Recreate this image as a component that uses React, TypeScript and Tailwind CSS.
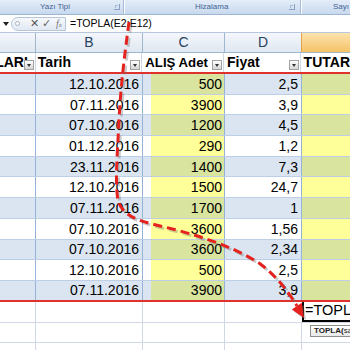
const dates = [
  "12.10.2016",
  "07.11.2016",
  "07.10.2016",
  "01.12.2016",
  "23.11.2016",
  "12.10.2016",
  "07.11.2016",
  "07.10.2016",
  "07.10.2016",
  "12.10.2016",
  "07.11.2016",
];
const adet = ["500", "3900", "1200", "290", "1400", "1500", "1700", "3600", "3600", "500", "3900"];
const fiyat = ["2,5", "3,9", "4,5", "1,2", "7,3", "24,7", "1", "1,56", "2,34", "2,5", "3,9"];

const curve =
  "M129,22 C126,45 121,80 119,120 C117,160 115,185 118,200 C122,215 136,220 156,225 C191,233 231,245 259,263 C277,276 289,293 297,306";
const head = "304,318 291.8,309.6 301.8,302.8";

function FilterBtn() {
  return (
    <span className="absolute right-[1px] bottom-[2px] w-[10px] h-[10px] border border-[#a3a3a3] bg-gradient-to-b from-white to-[#d6d6d6] flex items-center justify-center">
      <span className="w-0 h-0 border-l-[2.5px] border-r-[2.5px] border-t-[3px] border-l-transparent border-r-transparent border-t-[#333]" />
    </span>
  );
}

function Launcher() {
  return (
    <span className="w-[6px] h-[6px] border-r border-b border-[#8aa2c2] relative">
      <span className="absolute left-[1px] top-[1px] w-[3px] h-[3px] border-l border-t border-[#a9bcd6]" />
    </span>
  );
}

export default function App() {
  return (
    <div
      className="relative w-[350px] h-[350px] overflow-hidden bg-white text-black"
      style={{ fontFamily: '"Liberation Sans", Arial, sans-serif' }}
    >
      {/* ribbon group labels */}
      <div className="flex h-[15px] bg-gradient-to-b from-[#e4edf8] to-[#c8d9ee] border-b border-[#9fb6d3] text-[8px] text-[#3f6394]">
        <div className="w-[124px] flex items-center border-r border-[#a6bbd6] pl-[40px] pr-[3px]">
          <span className="flex-1">Yazı Tipi</span>
          <Launcher />
        </div>
        <div className="w-[177px] flex items-center border-l border-white border-r border-r-[#a6bbd6] pl-[70px] pr-[5px]">
          <span className="flex-1">Hizalama</span>
          <Launcher />
        </div>
        <div className="flex-1 flex items-center border-l border-white pl-[31px]">
          <span>Sayı</span>
        </div>
      </div>

      {/* formula bar */}
      <div className="flex items-center h-[18px] bg-white border-b border-[#b6c7dd]">
        <div className="w-[11px] flex items-center justify-center">
          <span className="w-0 h-0 border-l-[3px] border-r-[3px] border-t-[4px] border-l-transparent border-r-transparent border-t-[#222]" />
        </div>
        <div className="w-[55px] h-[14px] flex items-center rounded-l-full border border-[#b5c6dc] bg-gradient-to-b from-[#f7f9fc] to-[#e1e8f2] pl-[3px] text-[#6b7584]">
          <span className="w-[5px] h-[5px] rounded-full border border-[#a6b2c2] bg-white" />
          <span className="ml-[10px] text-[11px] leading-none text-[#555]">✕</span>
          <span className="ml-[3px] text-[11px] leading-none text-[#666]">✓</span>
          <span className="ml-[5px] text-[10px] leading-none italic text-[#777]" style={{ fontFamily: '"Liberation Serif", serif' }}>
            f<span className="text-[7px]">x</span>
          </span>
        </div>
        <span className="ml-[4px] text-[10.5px] leading-none">=TOPLA(E2:E12)</span>
      </div>

      {/* column headers */}
      <div className="flex h-[20px] text-[14px] text-[#27415f] border-b border-[#9eb6ce]">
        <div className="w-[36px] bg-gradient-to-b from-[#f4f7fb] to-[#dfe7f1] border-r border-[#9eb6ce]" />
        <div className="w-[107px] flex items-center justify-center bg-gradient-to-b from-[#f4f7fb] to-[#dfe7f1] border-r border-[#9eb6ce]">B</div>
        <div className="w-[82px] flex items-center justify-center bg-gradient-to-b from-[#f4f7fb] to-[#dfe7f1] border-r border-[#9eb6ce]">C</div>
        <div className="w-[77px] flex items-center justify-center bg-gradient-to-b from-[#f4f7fb] to-[#dfe7f1] border-r border-[#e1a24a]">D</div>
        <div className="flex-1 bg-gradient-to-b from-[#fce3ae] to-[#f5c266]" />
      </div>

      {/* table header row */}
      <div className="flex h-[21px] text-[14px] font-bold border-b-2 border-[#e0322d]">
        <div className="relative w-[36px] overflow-hidden border-r border-[#d0d7e5] flex items-center justify-end pr-[7px] whitespace-nowrap">
          ÜRÜNLARI
          <FilterBtn />
        </div>
        <div className="relative w-[107px] border-r border-[#d0d7e5] flex items-center pl-[2px]">
          Tarih
          <FilterBtn />
        </div>
        <div className="relative w-[82px] border-r border-[#d0d7e5] flex items-center pl-[3px] whitespace-nowrap text-[13.2px]">
          ALIŞ Adet
          <FilterBtn />
        </div>
        <div className="relative w-[77px] border-r border-[#d0d7e5] flex items-center pl-[3px]">
          Fiyat
          <FilterBtn />
        </div>
        <div className="flex-1 flex items-center pl-[3px]">TUTAR</div>
      </div>

      {/* data rows */}
      {dates.map((d, i) => {
        const even = i % 2 === 0;
        const rowBg = even ? "bg-[#dbe5f1]" : "bg-white";
        const yel = even ? "bg-[#d9e59e]" : "bg-[#ffff99]";
        const last = i === dates.length - 1;
        return (
          <div
            key={i}
            className={
              "flex h-[20.7px] text-[14px] leading-none " +
              (last ? "border-b-2 border-[#e0322d]" : "border-b border-[#bccfe6]")
            }
          >
            <div className={"w-[36px] border-r border-[#95b3d7] " + rowBg} />
            <div className={"w-[107px] border-r border-[#95b3d7] flex items-center justify-end pr-[3px] " + rowBg}>{d}</div>
            <div className={"w-[82px] border-r border-[#95b3d7] flex " + rowBg}>
              <div className={"ml-[8px] flex-1 flex items-center justify-end pr-[2px] " + yel}>{adet[i]}</div>
            </div>
            <div className={"w-[77px] border-r border-[#95b3d7] flex items-center justify-end pr-[3px] " + rowBg}>{fiyat[i]}</div>
            <div className={"flex-1 " + yel} />
          </div>
        );
      })}

      {/* rows below the table */}
      <div className="flex h-[21px] border-b border-[#d0d7e5]">
        <div className="w-[36px] border-r border-[#d0d7e5]" />
        <div className="w-[107px] border-r border-[#d0d7e5]" />
        <div className="w-[82px] border-r border-[#d0d7e5]" />
        <div className="w-[77px]" />
        <div className="flex-1 border-l-2 border-b-2 border-black flex items-center pl-[1px] text-[14.5px] leading-none whitespace-nowrap overflow-hidden">
          =TOPLA
        </div>
      </div>
      {[0, 1].map((r) => (
        <div key={r} className="flex h-[20.7px] border-b border-[#d0d7e5]">
          <div className="w-[36px] border-r border-[#d0d7e5]" />
          <div className="w-[107px] border-r border-[#d0d7e5]" />
          <div className="w-[82px] border-r border-[#d0d7e5]" />
          <div className="w-[77px] border-r border-[#d0d7e5]" />
          <div className="flex-1" />
        </div>
      ))}

      {/* function tooltip */}
      <div className="absolute left-[310px] top-[325px] h-[12px] pl-[3px] pr-[6px] border border-[#8d8d8d] bg-gradient-to-b from-white to-[#e9e9e9] text-[8px] leading-[10px] text-[#222] whitespace-nowrap">
        <span className="font-bold">TOPLA(</span>sayı1
      </div>

      {/* dashed arrow */}
      <svg className="absolute inset-0 pointer-events-none" width="350" height="350" viewBox="0 0 350 350">
        <g transform="translate(2,2)" opacity="0.35">
          <path d={curve} fill="none" stroke="#6e6e6e" strokeWidth="3" strokeDasharray="9 5" />
          <polygon points={head} fill="#6e6e6e" />
        </g>
        <path d={curve} fill="none" stroke="#e5231e" strokeWidth="3" strokeDasharray="9 5" />
        <polygon points={head} fill="#e5231e" />
      </svg>
    </div>
  );
}
